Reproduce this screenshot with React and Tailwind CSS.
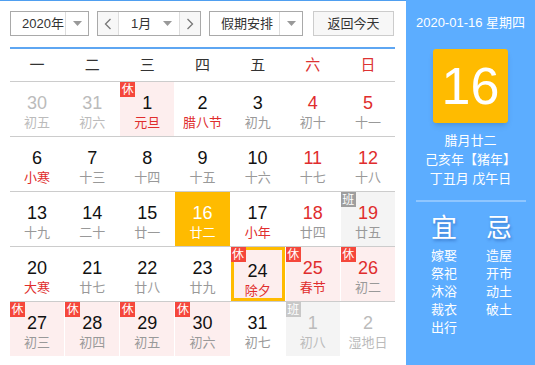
import React from "react";

const RED = "text-[#e02d2d]";

const ROWS = [
  [
    { d: 30, l: "初五", other: true },
    { d: 31, l: "初六", other: true },
    { d: 1, l: "元旦", lRed: true, rest: true },
    { d: 2, l: "腊八节", lRed: true },
    { d: 3, l: "初九" },
    { d: 4, l: "初十", dRed: true },
    { d: 5, l: "十一", dRed: true },
  ],
  [
    { d: 6, l: "小寒", lRed: true },
    { d: 7, l: "十三" },
    { d: 8, l: "十四" },
    { d: 9, l: "十五" },
    { d: 10, l: "十六" },
    { d: 11, l: "十七", dRed: true },
    { d: 12, l: "十八", dRed: true },
  ],
  [
    { d: 13, l: "十九" },
    { d: 14, l: "二十" },
    { d: 15, l: "廿一" },
    { d: 16, l: "廿二", today: true },
    { d: 17, l: "小年", lRed: true },
    { d: 18, l: "廿四", dRed: true },
    { d: 19, l: "廿五", dRed: true, work: true },
  ],
  [
    { d: 20, l: "大寒", lRed: true },
    { d: 21, l: "廿七" },
    { d: 22, l: "廿八" },
    { d: 23, l: "廿九" },
    { d: 24, l: "除夕", lRed: true, rest: true, selected: true },
    { d: 25, l: "春节", dRed: true, lRed: true, rest: true },
    { d: 26, l: "初二", dRed: true, rest: true },
  ],
  [
    { d: 27, l: "初三", rest: true },
    { d: 28, l: "初四", rest: true },
    { d: 29, l: "初五", rest: true },
    { d: 30, l: "初六", rest: true },
    { d: 31, l: "初七" },
    { d: 1, l: "初八", other: true, work: true },
    { d: 2, l: "湿地日", other: true },
  ],
];

const WEEK = ["一", "二", "三", "四", "五", "六", "日"];

function Caret() {
  return (
    <svg width="9" height="5" viewBox="0 0 9 5">
      <path d="M0 0h9L4.5 5z" fill="#999" />
    </svg>
  );
}

function Chevron({ dir }) {
  return (
    <svg width="8" height="12" viewBox="0 0 8 12">
      <path
        d={dir === "left" ? "M6.5 1L1.5 6l5 5" : "M1.5 1l5 5-5 5"}
        fill="none"
        stroke="#777"
        strokeWidth="1.3"
      />
    </svg>
  );
}

function Cell({ c }) {
  let bg = "";
  if (c.today) bg = "bg-[#ffbb00]";
  else if (c.rest) bg = "bg-[#fdeeee]";
  else if (c.work) bg = "bg-[#f4f4f4]";

  let dColor = "text-[#111]";
  let lColor = "text-[#999]";
  if (c.dRed) dColor = RED;
  if (c.lRed) lColor = RED;
  if (c.other) {
    dColor = "text-[#bbb]";
    lColor = "text-[#bbb]";
  }
  if (c.today) {
    dColor = "text-white";
    lColor = "text-white";
  }

  return (
    <div
      className={`relative flex h-[54px] flex-col items-center pt-[10px] ${bg} ${
        c.selected ? "border-[3px] border-[#ffbb00] pt-[7px]" : ""
      }`}
    >
      {c.rest && (
        <span
          className={`absolute flex h-[15px] w-[15px] items-center justify-center bg-[#f5473b] text-[12px] leading-none text-white ${
            c.selected ? "-left-[3px] -top-[3px]" : "left-0 top-0"
          }`}
        >
          休
        </span>
      )}
      {c.work && (
        <span
          className={`absolute left-0 top-0 flex h-[15px] w-[15px] items-center justify-center text-[12px] leading-none text-white ${
            c.other ? "bg-[#c8c8c8]" : "bg-[#9e9e9e]"
          }`}
        >
          班
        </span>
      )}
      <span className={`text-[18px] leading-[22px] ${dColor}`}>{c.d}</span>
      <span className={`text-[13px] leading-[18px] ${lColor}`}>{c.l}</span>
    </div>
  );
}

export default function App() {
  return (
    <div className="flex h-[365px] w-[535px] font-['Liberation_Sans','Noto_Sans_CJK_SC',sans-serif] text-[#333]">
      {/* Calendar */}
      <div className="w-[406px] border-t border-[#4f9ff0] pl-[10px] pr-[11px] pt-[10px]">
        <div className="flex h-[25px] whitespace-nowrap text-[13px]">
          <div className="flex w-[79px] border border-[#a9a9a9]">
            <div className="flex w-[54px] items-center pl-[11px]">2020年</div>
            <div className="flex flex-1 items-center justify-center border-l border-[#ddd]">
              <Caret />
            </div>
          </div>
          <div className="ml-[8px] flex w-[104px] border border-[#a9a9a9]">
            <div className="flex w-[21px] items-center justify-center border-r border-[#ddd] bg-[#f7f7f7]">
              <Chevron dir="left" />
            </div>
            <div className="flex w-[60px] items-center pl-[12px]">
              <span>1月</span>
              <span className="ml-auto mr-[7px] flex">
                <Caret />
              </span>
            </div>
            <div className="flex flex-1 items-center justify-center border-l border-[#ddd] bg-[#f7f7f7]">
              <Chevron dir="right" />
            </div>
          </div>
          <div className="ml-[8px] flex w-[94px] border border-[#a9a9a9]">
            <div className="flex w-[69px] items-center pl-[11px]">假期安排</div>
            <div className="flex flex-1 items-center justify-center border-l border-[#ddd]">
              <Caret />
            </div>
          </div>
          <div className="ml-[10px] flex w-[81px] items-center justify-center border border-[#ccc] bg-[#f7f7f7]">
            返回今天
          </div>
        </div>

        <div className="mt-[11px] border-t-2 border-[#5ea6f2]" />
        <div className="grid h-[32px] grid-cols-7 gap-x-px text-[15px]">
          {WEEK.map((w, i) => (
            <div
              key={w}
              className={`flex items-center justify-center ${i > 4 ? "text-[#d33]" : "text-[#333]"}`}
            >
              {w}
            </div>
          ))}
        </div>

        {ROWS.map((row, ri) => (
          <div key={ri} className="grid grid-cols-7 gap-x-px border-t border-[#ccc]">
            {row.map((c, ci) => (
              <Cell key={ci} c={c} />
            ))}
          </div>
        ))}
      </div>

      {/* Side panel */}
      <div className="flex flex-1 flex-col bg-[#5cadff] pt-[14px] text-white">
        <div className="text-center text-[13px] leading-[18px]">2020-01-16 星期四</div>
        <div className="mx-auto mt-[17px] flex h-[74px] w-[75px] items-center justify-center rounded-[3px] bg-[#ffbb00] text-[52px] leading-none shadow-md">
          16
        </div>
        <div className="mt-[8px] text-center text-[13px] leading-[19px]">
          <div>腊月廿二</div>
          <div>己亥年【猪年】</div>
          <div>丁丑月 戊午日</div>
        </div>
        <div className="mx-auto mt-[12px] h-[2px] w-[110px] bg-[#8fc6ff]" />
        <div className="mt-[11px] flex pl-[25px]">
          <div className="w-[55px]">
            <div className="text-[26px] leading-[30px] [text-shadow:1px_2px_3px_rgba(0,40,120,0.35)]">宜</div>
            <div className="mt-[4px] text-[13px] leading-[18px]">
              <div>嫁娶</div>
              <div>祭祀</div>
              <div>沐浴</div>
              <div>裁衣</div>
              <div>出行</div>
            </div>
          </div>
          <div>
            <div className="text-[26px] leading-[30px] [text-shadow:1px_2px_3px_rgba(0,40,120,0.35)]">忌</div>
            <div className="mt-[4px] text-[13px] leading-[18px]">
              <div>造屋</div>
              <div>开市</div>
              <div>动土</div>
              <div>破土</div>
            </div>
          </div>
        </div>
      </div>
    </div>
  );
}
